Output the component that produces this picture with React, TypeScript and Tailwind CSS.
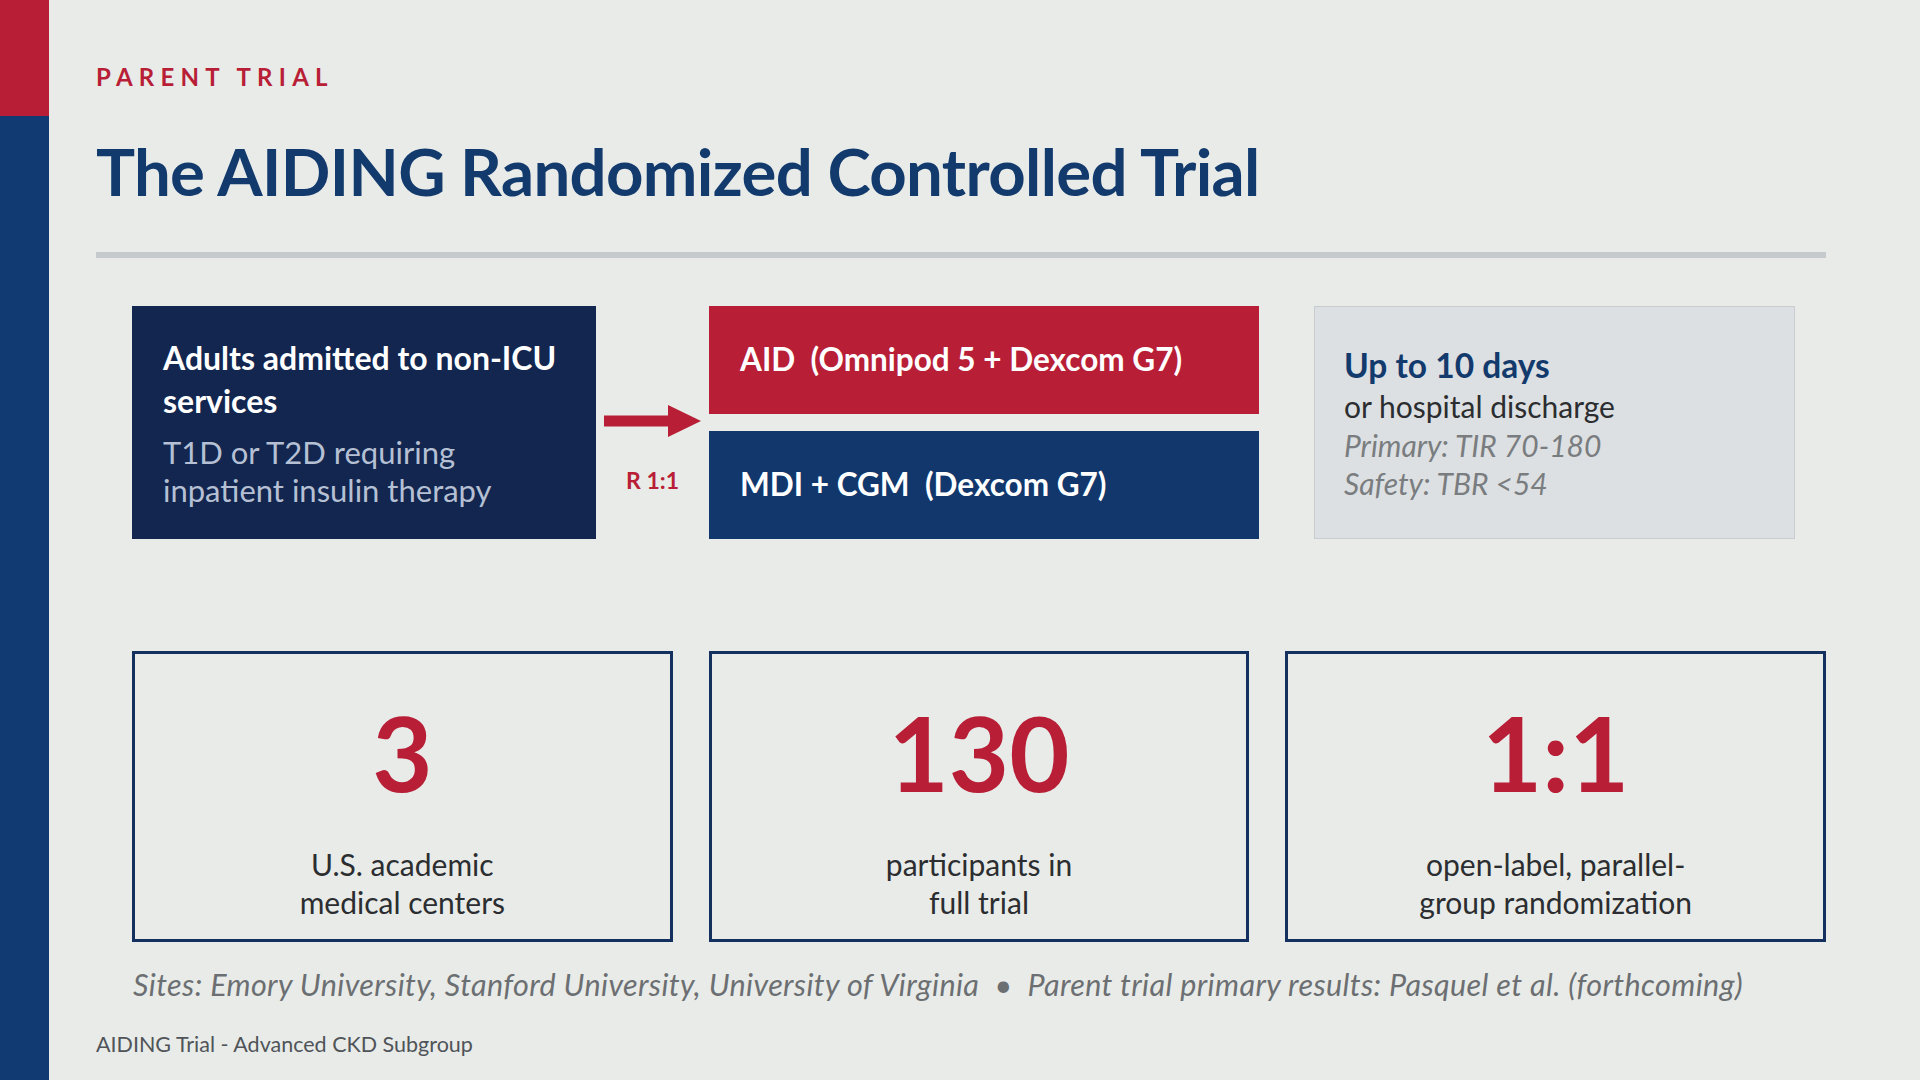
import React from "react";

const font = { fontFamily: 'Lato, "Noto Sans", sans-serif' };

function Arrow() {
  return (
    <svg width="97" height="32" viewBox="0 0 97 32" className="block">
      <rect x="0" y="10.5" width="66" height="11" fill="#b81e36" />
      <polygon points="64,0 97,16 64,32" fill="#b81e36" />
    </svg>
  );
}

function Stat({ value, l1, l2 }: { value: string; l1: string; l2: string }) {
  return (
    <div className="flex-1 h-[291px] border-[3px] border-[#13305f] flex flex-col items-center">
      <div className="pt-[46px] text-[104px] leading-[104px] font-bold text-[#b81e36]">{value}</div>
      <div className="mt-[41px] text-[30px] leading-[38px] text-[#2b2d30] text-center">
        <div>{l1}</div>
        <div>{l2}</div>
      </div>
    </div>
  );
}

export default function App() {
  return (
    <div className="w-[1920px] h-[1080px] bg-[#e8ebe8] flex overflow-hidden" style={font}>
      <div className="w-[49px] flex flex-col">
        <div className="h-[116px] bg-[#b81e36]" />
        <div className="flex-1 bg-[#113a72]" />
      </div>
      <div className="flex-1 pl-[47px] pr-[94px] flex flex-col">
        <div className="pt-[62px] text-[24px] leading-[30px] font-bold tracking-[0.26em] text-[#b81e36]">
          PARENT TRIAL
        </div>
        <div className="mt-[39px] text-[65.3px] leading-[80px] font-bold text-[#133a6d] tracking-[-0.01em]">
          The AIDING Randomized Controlled Trial
        </div>
        <div className="mt-[41px] h-[6px] bg-[#c5cacc]" />

        <div className="mt-[48px] ml-[36px] flex h-[233px]">
          <div className="w-[464px] bg-[#12264f] flex flex-col justify-center pl-[31px] pr-[10px]">
            <div className="text-[32px] leading-[43px] font-bold text-white">
              Adults admitted to non-ICU
              <br />
              services
            </div>
            <div className="mt-[11px] text-[31px] leading-[38px] text-[#b6c0d4]">
              T1D or T2D requiring
              <br />
              inpatient insulin therapy
            </div>
          </div>
          <div className="w-[113px] flex flex-col items-center pt-[99px]">
            <Arrow />
            <div className="mt-[30px] text-[23px] leading-[26px] font-bold text-[#b81e36]">R 1:1</div>
          </div>
          <div className="w-[550px] flex flex-col gap-[17px]">
            <div className="flex-1 bg-[#b81e36] flex items-center pl-[31px] text-[31.5px] font-bold text-white whitespace-pre">
              {"AID  (Omnipod 5 + Dexcom G7)"}
            </div>
            <div className="flex-1 bg-[#11376c] flex items-center pl-[31px] text-[31.5px] font-bold text-white whitespace-pre">
              {"MDI + CGM  (Dexcom G7)"}
            </div>
          </div>
          <div className="ml-[55px] w-[481px] bg-[#dde0e2] border border-[#c9cdd0] flex flex-col justify-center pl-[29px]">
            <div className="text-[33.5px] leading-[42px] font-bold text-[#133a6d]">Up to 10 days</div>
            <div className="text-[30px] leading-[40px] text-[#2b2d30]">or hospital discharge</div>
            <div className="text-[30px] leading-[38px] italic text-[#7a7d80]">Primary: TIR 70-180</div>
            <div className="text-[30px] leading-[38px] italic text-[#7a7d80]">Safety: TBR &lt;54</div>
          </div>
        </div>

        <div className="mt-[112px] ml-[36px] flex gap-[36px]">
          <Stat value="3" l1="U.S. academic" l2="medical centers" />
          <Stat value="130" l1="participants in" l2="full trial" />
          <Stat value="1:1" l1="open-label, parallel-" l2="group randomization" />
        </div>

        <div className="mt-[26px] ml-[37px] text-[30.5px] leading-[32px] italic tracking-[0.013em] text-[#6c6f72] whitespace-pre">
          {"Sites: Emory University, Stanford University, University of Virginia  \u2022  Parent trial primary results: Pasquel et al. (forthcoming)"}
        </div>
        <div className="mt-[32px] text-[21.5px] leading-[24px] text-[#505458]">AIDING Trial - Advanced CKD Subgroup</div>
      </div>
    </div>
  );
}
